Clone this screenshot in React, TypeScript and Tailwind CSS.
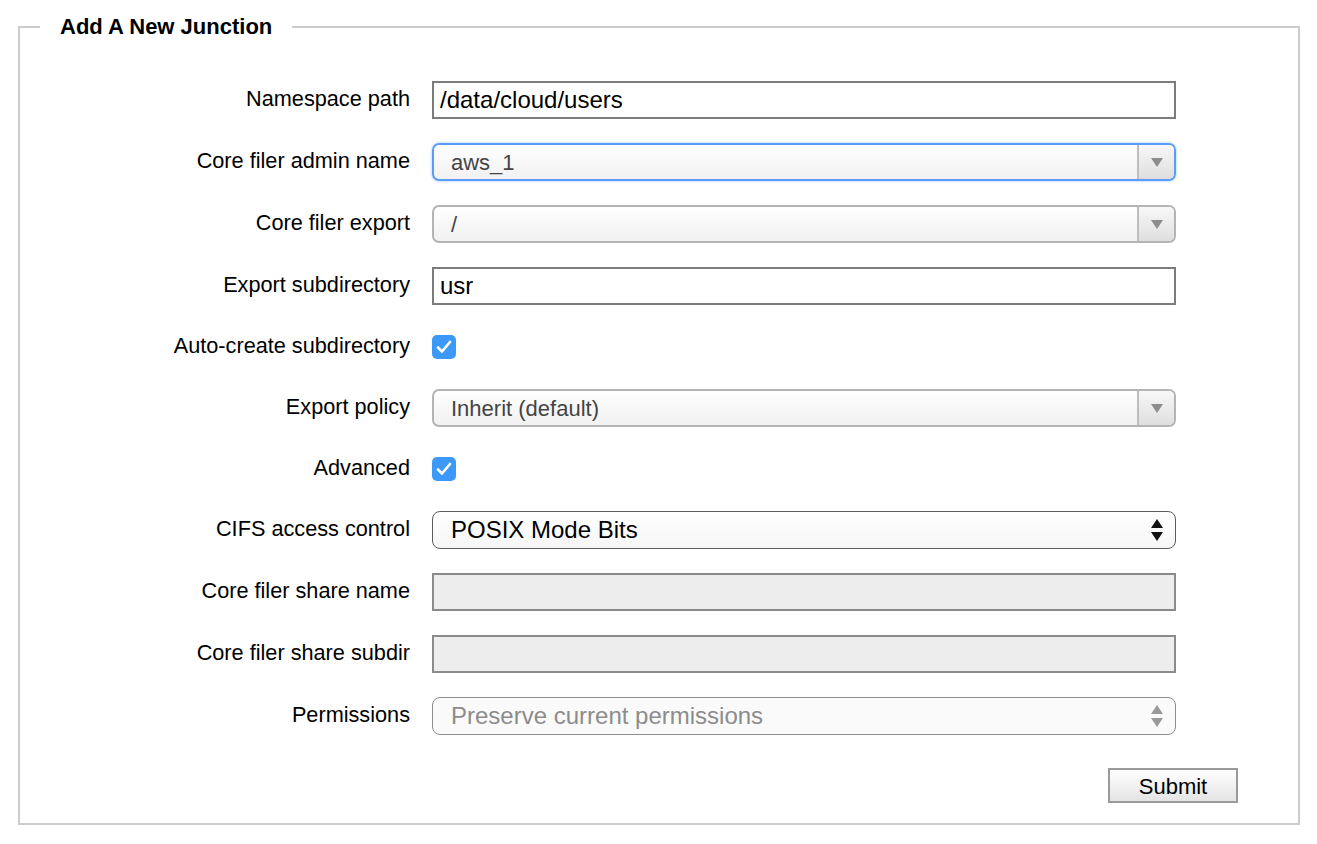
import React from "react";

type Row =
  | { kind: "text"; label: string; value: string; disabled?: boolean }
  | { kind: "dropdown"; label: string; value: string; focused?: boolean }
  | { kind: "check"; label: string }
  | { kind: "native"; label: string; value: string; disabled?: boolean };

const rows: Row[] = [
  { kind: "text", label: "Namespace path", value: "/data/cloud/users" },
  { kind: "dropdown", label: "Core filer admin name", value: "aws_1", focused: true },
  { kind: "dropdown", label: "Core filer export", value: "/" },
  { kind: "text", label: "Export subdirectory", value: "usr" },
  { kind: "check", label: "Auto-create subdirectory" },
  { kind: "dropdown", label: "Export policy", value: "Inherit (default)" },
  { kind: "check", label: "Advanced" },
  { kind: "native", label: "CIFS access control", value: "POSIX Mode Bits" },
  { kind: "text", label: "Core filer share name", value: "", disabled: true },
  { kind: "text", label: "Core filer share subdir", value: "", disabled: true },
  { kind: "native", label: "Permissions", value: "Preserve current permissions", disabled: true },
];

const TextField = ({ value, disabled }: { value: string; disabled?: boolean }) => (
  <input
    readOnly
    value={value}
    className={
      "h-[38px] w-[744px] border-2 px-[6px] text-[24px] text-black outline-none " +
      (disabled ? "border-[#8b8b8b] bg-[#ededed]" : "border-[#7c7c7c] bg-white")
    }
  />
);

const Dropdown = ({ value, focused }: { value: string; focused?: boolean }) => (
  <div
    className={
      "flex h-[38px] w-[744px] items-stretch overflow-hidden rounded-[7px] border-2 bg-gradient-to-b from-white to-[#f1f1f1] " +
      (focused
        ? "border-[#5b9cf6] shadow-[0_0_3px_rgba(91,156,246,0.6)]"
        : "border-[#b4b4b4]")
    }
  >
    <div className="flex flex-1 items-center pl-[17px] text-[22px] text-[#444]">{value}</div>
    <div className="flex w-[37px] items-center justify-center border-l-2 border-[#bdbdbd] bg-gradient-to-b from-[#f8f8f8] to-[#dedede]">
      <svg width="12" height="9" viewBox="0 0 12 9">
        <path d="M0 0 L12 0 L6 9 Z" fill="#8c8c8c" />
      </svg>
    </div>
  </div>
);

const NativeSelect = ({ value, disabled }: { value: string; disabled?: boolean }) => (
  <div
    className={
      "flex h-[38px] w-[744px] items-center justify-between rounded-[8px] border-[1.5px] pl-[18px] pr-[12px] text-[24px] " +
      (disabled
        ? "border-[#8f8f8f] bg-[#fafafa] text-[#8c8c8c]"
        : "border-[#5c5c5c] bg-gradient-to-b from-white to-[#f6f6f6] text-black")
    }
  >
    <span>{value}</span>
    <svg width="12" height="24" viewBox="0 0 12 24">
      <path d="M6 1 L12 10 L0 10 Z" fill={disabled ? "#9a9a9a" : "#111"} />
      <path d="M0 14 L12 14 L6 23 Z" fill={disabled ? "#9a9a9a" : "#111"} />
    </svg>
  </div>
);

const Checkbox = () => (
  <div className="flex h-[24px] w-[24px] items-center justify-center rounded-[5px] bg-[#3d99f7]">
    <svg width="18" height="16" viewBox="0 0 18 16">
      <path
        d="M3 8.5 L7 12.5 L15 3"
        stroke="white"
        strokeWidth="2.6"
        fill="none"
        strokeLinecap="round"
        strokeLinejoin="round"
      />
    </svg>
  </div>
);

const App = () => {
  return (
    <div className="min-h-[844px] bg-white pt-[14px] pl-[18px] font-['Liberation_Sans',Arial,sans-serif] text-black">
      <fieldset className="m-0 w-[1282px] border-2 border-[#cccccc] pt-[41px] pr-[60px] pb-[20px] pl-[20px]">
        <legend className="px-[20px] text-[22px] font-bold leading-[26px]">Add A New Junction</legend>

        <div className="flex flex-col gap-[24px]">
          {rows.map((row) => (
            <div
              key={row.label}
              className={
                "flex items-center gap-[22px] " + (row.kind === "check" ? "h-[36px]" : "h-[38px]")
              }
            >
              <label className="mb-[3px] w-[370px] text-right text-[21.7px] leading-[26px]">{row.label}</label>
              {row.kind === "text" && <TextField value={row.value} disabled={row.disabled} />}
              {row.kind === "dropdown" && <Dropdown value={row.value} focused={row.focused} />}
              {row.kind === "check" && <Checkbox />}
              {row.kind === "native" && <NativeSelect value={row.value} disabled={row.disabled} />}
            </div>
          ))}
        </div>

        <div className="mt-[33px] flex justify-end">
          <button className="h-[35px] w-[130px] border-2 border-[#9a9a9a] bg-gradient-to-b from-white to-[#e4e4e4] text-[22px] text-black">
            Submit
          </button>
        </div>
      </fieldset>
    </div>
  );
};

export default App;
